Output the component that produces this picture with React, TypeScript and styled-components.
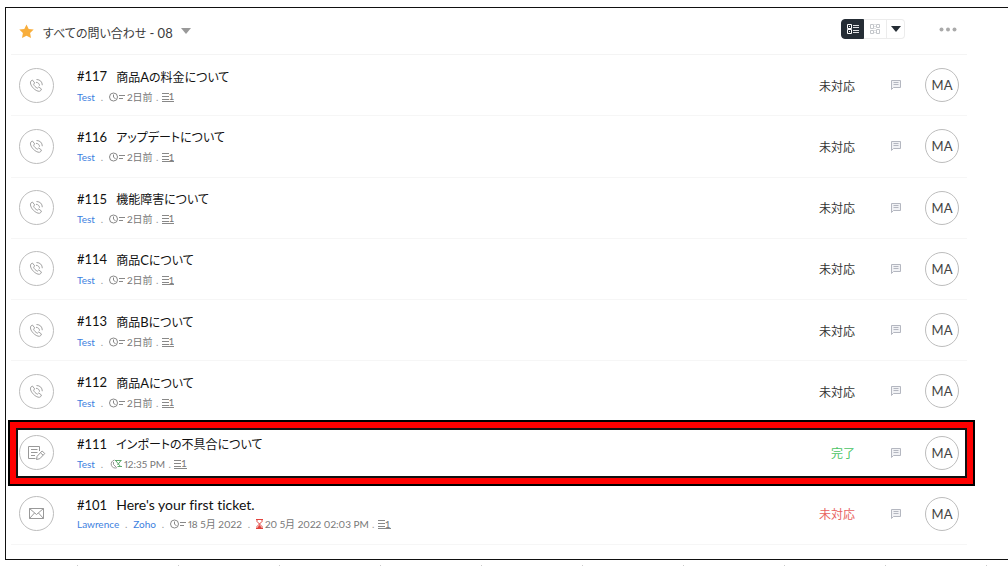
import React from "react";
import styled, { createGlobalStyle } from "styled-components";

const GlobalStyle = createGlobalStyle`
  * { box-sizing: border-box; }
  body {
    margin: 0;
    background: #fff;
    color: #222;
    font-family: Lato, "Noto Sans CJK JP", sans-serif;
    font-size: 13px;
    font-variant-ligatures: none;
    overflow-x: hidden;
  }
  button { font: inherit; color: inherit; background: none; border: 0; padding: 0; cursor: pointer; }
  a { text-decoration: none; }
  svg { display: block; flex: none; }
`;

const Page = styled.div`
  padding: 7px 0 0 5px;
`;

const Panel = styled.main`
  border: 1px solid #111;
  border-right: 0;
  padding: 0 41px 14px 5px;
`;

const Header = styled.header`
  display: flex;
  align-items: center;
  height: 47px;
  padding: 0 10px 4px 8px;
  border-bottom: 1px solid #f4f4f4;
`;

const ViewTitle = styled.div`
  display: flex;
  align-items: center;
  padding-top: 4px;
`;

const ViewButton = styled.button`
  display: flex;
  align-items: center;
  gap: 8px;
  margin-left: 9px;
  line-height: 20px;
  font-size: 12px;
  color: #3c3c3c;
  font-feature-settings: "palt";
`;

const ViewLabel = styled.span`
  padding-top: 5px;
`;

const Latin = styled.span`
  font-size: 13px;
`;

const ViewModes = styled.div`
  display: flex;
  height: 20px;
  margin-left: auto;
`;

const ModeButton = styled.button<{ $active?: boolean; $narrow?: boolean }>`
  display: grid;
  place-items: center;
  width: ${(p) => (p.$narrow ? "18px" : "23px")};
  border: 1px solid ${(p) => (p.$active ? "#252d35" : "#ececec")};
  background: ${(p) => (p.$active ? "#252d35" : "#fff")};
  & + & { border-left: 0; }
  &:first-child { border-radius: 4px 0 0 4px; }
  &:last-child { border-radius: 0 4px 4px 0; }
`;

const MoreButton = styled.button`
  margin-left: 34px;
`;

const List = styled.ul`
  display: grid;
  grid-auto-rows: 1fr;
  min-height: 490px;
  margin: 0;
  padding: 0;
  list-style: none;
`;

const Row = styled.li`
  position: relative;
  display: flex;
  align-items: center;
  padding: 0 8px;
  border-bottom: 1px solid #f6f6f6;
`;

const Highlight = styled.div`
  position: absolute;
  inset: -3px -8px -3px -3px;
  border: 2px solid #000;
  box-shadow: inset 0 0 0 6px #f00, inset 0 0 0 8px #111;
  pointer-events: none;
`;

const Channel = styled.span`
  display: grid;
  place-items: center;
  flex: none;
  width: 35px;
  height: 35px;
  border: 1px solid #bdbdbd;
  border-radius: 50%;
  color: #999;
`;

const Body = styled.div`
  flex: 1;
  min-width: 0;
  margin-left: 23px;
`;

const Title = styled.div`
  display: flex;
  gap: 9px;
  line-height: 20px;
  color: #111;
`;

const Subject = styled.span<{ $latin: boolean }>`
  font-size: ${(p) => (p.$latin ? "14px" : "12px")};
  padding-top: ${(p) => (p.$latin ? "0" : "1px")};
  font-feature-settings: "palt";
`;

const Meta = styled.div`
  display: flex;
  align-items: center;
  line-height: 16px;
  margin-top: 1px;
  font-size: 10px;
  color: #777;
`;

const Contact = styled.a`
  color: #3d7fe0;
`;

const Dot = styled.span<{ $tight?: boolean }>`
  width: ${(p) => (p.$tight ? "9px" : "14px")};
  text-align: center;
  color: #999;
`;

const Time = styled.span`
  display: flex;
  align-items: center;
  gap: 2px;
  font-feature-settings: "pnum";
`;

const Status = styled.span<{ $color: string }>`
  font-size: 12px;
  color: ${(p) => p.$color};
`;

const ChatButton = styled.button`
  margin: 0 24px 0 36px;
`;

const Avatar = styled.span`
  display: grid;
  place-items: center;
  width: 34px;
  height: 34px;
  border: 1px solid #bdbdbd;
  border-radius: 50%;
  color: #444;
`;

const Ruler = styled.footer`
  display: flex;
  margin: 5px 0 0 72px;
  height: 2px;
  overflow: hidden;
`;

const Tick = styled.span`
  flex: none;
  width: 101px;
  border-left: 1px solid #ccc;
`;

function StarIcon() {
  return (
    <svg width="15" height="15" viewBox="0 0 15 15" fill="#f8ae3c">
      <path d="M7.5 .4 9.7 4.9l5 .7-3.6 3.5.9 5-4.5-2.4L3 14.100l.9-5L.3 5.600l5-.7z" />
    </svg>
  );
}

function Caret({ color }: { color: string }) {
  return (
    <svg width="10" height="6" viewBox="0 0 10 6" fill={color}>
      <path d="M0 0h10L5 6z" />
    </svg>
  );
}

function ListModeIcon() {
  return (
    <svg width="12" height="10" viewBox="0 0 12 10" fill="none" stroke="#fff">
      <path d="M.5.5h4v4h-4zM.5 5.5h4v4h-4z" />
      <path d="M2 2.5h1M2 7.5h1" />
      <path d="M6 1.500h6M6 3.500h6M6 6.500h6M6 8.500h6" strokeOpacity=".85" />
    </svg>
  );
}

function BoardModeIcon() {
  return (
    <svg width="10" height="10" viewBox="0 0 10 10" fill="none" stroke="#c3c6ca">
      <path d="M.5.5h3v4h-3zM.5 6.500h3v3h-3zM6.500.5h3v3h-3zM6.500 5.500h3v4h-3z" />
      <path d="M5 0v10" strokeDasharray="1 1" />
    </svg>
  );
}

function MoreIcon() {
  return (
    <svg width="18" height="5" viewBox="0 0 18 5" fill="#aaa">
      <circle cx="2.5" cy="2.5" r="2" />
      <circle cx="9" cy="2.5" r="2" />
      <circle cx="15.5" cy="2.5" r="2" />
    </svg>
  );
}

type ChannelKind = "phone" | "form" | "mail";

function ChannelIcon({ kind }: { kind: ChannelKind }) {
  if (kind === "phone") {
    return (
      <svg width="15" height="15" viewBox="0 0 15 15" fill="none" stroke="currentColor" strokeWidth=".9">
        <path d="M1.8 3.2 3.4 2 5.7 4.9 4.6 6.2c.5 1.6 2 3.2 3.8 4L9.7 9l2.8 2-1 1.8c-1 1-3.6.5-6.2-1.7S.6 5.3 1.8 3.2z" />
        <path d="M7 4.3c2 0 3.5 1.4 3.5 3.4M7.5 1.5c3.5 0 5.8 2.3 5.8 5.7" />
      </svg>
    );
  }
  if (kind === "form") {
    return (
      <svg width="19" height="16" viewBox="0 0 19 16" fill="none" stroke="currentColor">
        <path d="M12.5 6V1.5h-11v12h7M4 4.500h6.500M4 7.500h6.500M4 10.500h4" />
        <path d="M9.500 14.500l.6-3.200 5-5.300 2.700 2.500-5 5.200zM13.500 7.800l2.600 2.400" />
      </svg>
    );
  }
  return (
    <svg width="15" height="11" viewBox="0 0 15 11" fill="none" stroke="currentColor">
      <path d="M.5.5h14v10H.5zM.5.5l7 6 7-6M.5 10.5l5-5.5M14.5 10.5l-5-5.5" />
    </svg>
  );
}

type TimeKind = "open" | "closed" | "due";

function TimeIcon({ kind }: { kind: TimeKind }) {
  if (kind === "due") {
    return (
      <svg width="7" height="10" viewBox="0 0 7 10" fill="none" stroke="#e2433d">
        <path d="M0 .5h7M0 9.5h7M1 1v1.5L3.5 5 1 7.5V9M6 1v1.5L3.5 5 6 7.5V9" />
        <path d="M2 8.5h3L3.5 6.5z" fill="#e2433d" />
      </svg>
    );
  }
  if (kind === "closed") {
    return (
      <svg width="13" height="10" viewBox="0 0 13 10" fill="none">
        <path d="M8 8.600A4 4 0 1 1 5.500 1.100M4.500 3V5.500L7 8" stroke="#999" />
        <path d="M6 1.500h6.500M8.500 7.500H13M7 2l4.500 5.500M12 1.500 8.500 6" stroke="#5aa869" />
      </svg>
    );
  }
  return (
    <svg width="16" height="10" viewBox="0 0 16 10" fill="none" stroke="#888">
      <circle cx="4.5" cy="5" r="4" />
      <path d="M4.5 2.5V5l2 2M10 3.5h6M10 6.5h4" />
    </svg>
  );
}

const CountBox = styled.span`
  display: flex;
  align-items: center;
  height: 10px;
  line-height: 10px;
  border-bottom: 1px solid #888;
`;

function ThreadCount({ count }: { count: number }) {
  return (
    <CountBox>
      <svg width="7" height="7" viewBox="0 0 7 7" stroke="#888">
        <path d="M0 .5h7M0 3.5h7M0 6.5h7" />
      </svg>
      {count}
    </CountBox>
  );
}

function ChatIcon() {
  return (
    <svg width="10" height="10" viewBox="0 0 10 10" fill="none" stroke="#b4b7c0">
      <path d="M.5.5h9v7H2.500l-2 2z" fill="#f1f2f5" />
      <path d="M2.500 2.500h5M2.500 4.500h5" />
    </svg>
  );
}

interface Ticket {
  id: string;
  subject: string;
  contacts: string[];
  times: { kind: TimeKind; text: string }[];
  status: string;
  color: string;
  channel: ChannelKind;
  latin?: boolean;
  highlighted?: boolean;
}

const call = (id: string, subject: string): Ticket => ({
  id,
  subject,
  contacts: ["Test"],
  times: [{ kind: "open", text: "2日前" }],
  status: "未対応",
  color: "#333",
  channel: "phone",
});

const tickets: Ticket[] = [
  call("#117", "商品Aの料金について"),
  call("#116", "アップデートについて"),
  call("#115", "機能障害について"),
  call("#114", "商品Cについて"),
  call("#113", "商品Bについて"),
  call("#112", "商品Aについて"),
  {
    id: "#111",
    subject: "インポートの不具合について",
    contacts: ["Test"],
    times: [{ kind: "closed", text: "12:35 PM" }],
    status: "完了",
    color: "#4cc465",
    channel: "form",
    highlighted: true,
  },
  {
    id: "#101",
    subject: "Here's your first ticket.",
    contacts: ["Lawrence", "Zoho"],
    times: [
      { kind: "open", text: "18 5月 2022" },
      { kind: "due", text: "20 5月 2022 02:03 PM" },
    ],
    status: "未対応",
    color: "#e8625e",
    channel: "mail",
    latin: true,
  },
];

// Latin capitals inside a Japanese subject are set one size up.
function SubjectText({ text }: { text: string }) {
  return (
    <>
      {text.split(/([A-Z])/).map((part, i) => (i % 2 ? <Latin key={i}>{part}</Latin> : part))}
    </>
  );
}

function TicketRow({ ticket }: { ticket: Ticket }) {
  return (
    <Row>
      <Channel>
        <ChannelIcon kind={ticket.channel} />
      </Channel>
      <Body>
        <Title>
          <span>{ticket.id}</span>
          <Subject $latin={!!ticket.latin}>
            {ticket.latin ? ticket.subject : <SubjectText text={ticket.subject} />}
          </Subject>
        </Title>
        <Meta>
          {ticket.contacts.map((name) => (
            <React.Fragment key={name}>
              <Contact href="#">{name}</Contact>
              <Dot>.</Dot>
            </React.Fragment>
          ))}
          {ticket.times.map((time, i) => (
            <React.Fragment key={time.text}>
              <Time>
                <TimeIcon kind={time.kind} />
                {time.text}
              </Time>
              <Dot $tight={i === ticket.times.length - 1}>.</Dot>
            </React.Fragment>
          ))}
          <ThreadCount count={1} />
        </Meta>
      </Body>
      <Status $color={ticket.color}>{ticket.status}</Status>
      <ChatButton aria-label="コメント">
        <ChatIcon />
      </ChatButton>
      <Avatar>MA</Avatar>
      {ticket.highlighted && <Highlight />}
    </Row>
  );
}

export default function App() {
  return (
    <Page>
      <GlobalStyle />
      <Panel>
        <Header>
          <ViewTitle>
            <StarIcon />
            <ViewButton>
              <ViewLabel>
                すべての問い合わせ <Latin>- 08</Latin>
              </ViewLabel>
              <Caret color="#999" />
            </ViewButton>
          </ViewTitle>
          <ViewModes>
            <ModeButton $active aria-label="リスト">
              <ListModeIcon />
            </ModeButton>
            <ModeButton aria-label="ボード">
              <BoardModeIcon />
            </ModeButton>
            <ModeButton $narrow aria-label="表示">
              <Caret color="#252d35" />
            </ModeButton>
          </ViewModes>
          <MoreButton aria-label="その他">
            <MoreIcon />
          </MoreButton>
        </Header>
        <List>
          {tickets.map((t) => (
            <TicketRow key={t.id} ticket={t} />
          ))}
        </List>
      </Panel>
      <Ruler>
        {Array.from({ length: 10 }, (_, i) => (
          <Tick key={i} />
        ))}
      </Ruler>
    </Page>
  );
}
